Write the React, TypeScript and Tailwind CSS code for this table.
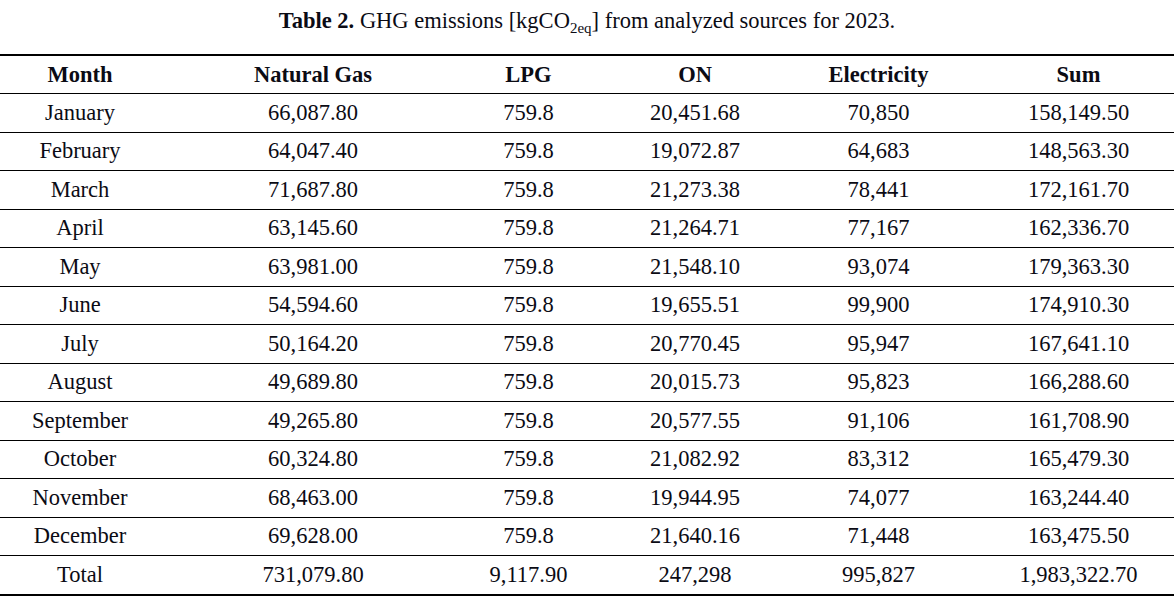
const rows: [string, string, string, string, string, string][] = [
  ["January", "66,087.80", "759.8", "20,451.68", "70,850", "158,149.50"],
  ["February", "64,047.40", "759.8", "19,072.87", "64,683", "148,563.30"],
  ["March", "71,687.80", "759.8", "21,273.38", "78,441", "172,161.70"],
  ["April", "63,145.60", "759.8", "21,264.71", "77,167", "162,336.70"],
  ["May", "63,981.00", "759.8", "21,548.10", "93,074", "179,363.30"],
  ["June", "54,594.60", "759.8", "19,655.51", "99,900", "174,910.30"],
  ["July", "50,164.20", "759.8", "20,770.45", "95,947", "167,641.10"],
  ["August", "49,689.80", "759.8", "20,015.73", "95,823", "166,288.60"],
  ["September", "49,265.80", "759.8", "20,577.55", "91,106", "161,708.90"],
  ["October", "60,324.80", "759.8", "21,082.92", "83,312", "165,479.30"],
  ["November", "68,463.00", "759.8", "19,944.95", "74,077", "163,244.40"],
  ["December", "69,628.00", "759.8", "21,640.16", "71,448", "163,475.50"]
];

const total = ["Total", "731,079.80", "9,117.90", "247,298", "995,827", "1,983,322.70"];
const headers = ["Month", "Natural Gas", "LPG", "ON", "Electricity", "Sum"];

// column grid tuned so each centred cell lands where the figure puts it
const grid = "grid grid-cols-[160px_306px_125px_208px_159px_1fr] items-center";

function Cells({ values, bold }: { values: string[]; bold?: boolean }) {
  return (
    <>
      {values.map((v, i) => (
        <div
          key={i}
          className={`text-center whitespace-nowrap ${i === 5 ? "pl-[25px]" : ""} ${bold ? "font-bold" : ""}`}
        >
          {v}
        </div>
      ))}
    </>
  );
}

export default function App() {
  return (
    <div
      className="h-[598px] w-[1174px] overflow-hidden bg-white text-[22.5px] leading-[26px] text-[#0b0b14]"
      style={{ fontFamily: '"Liberation Serif", "Times New Roman", serif' }}
    >
      <div className="h-[54px] pt-[8px] pl-[0px] text-center">
        <span className="font-bold">Table 2.</span> GHG emissions [kgCO
        <span className="relative top-[5px] text-[15px]">2eq</span>] from analyzed sources for 2023.
      </div>

      <div className={`${grid} h-[40px] border-t-2 border-b border-black`}>
        <Cells values={headers} bold />
      </div>

      {rows.map((r) => (
        <div key={r[0]} className={`${grid} h-[38.5px] border-b border-black`}>
          <Cells values={r} />
        </div>
      ))}

      <div className={`${grid} h-[40px] border-b-2 border-black`}>
        <Cells values={total} />
      </div>
    </div>
  );
}
